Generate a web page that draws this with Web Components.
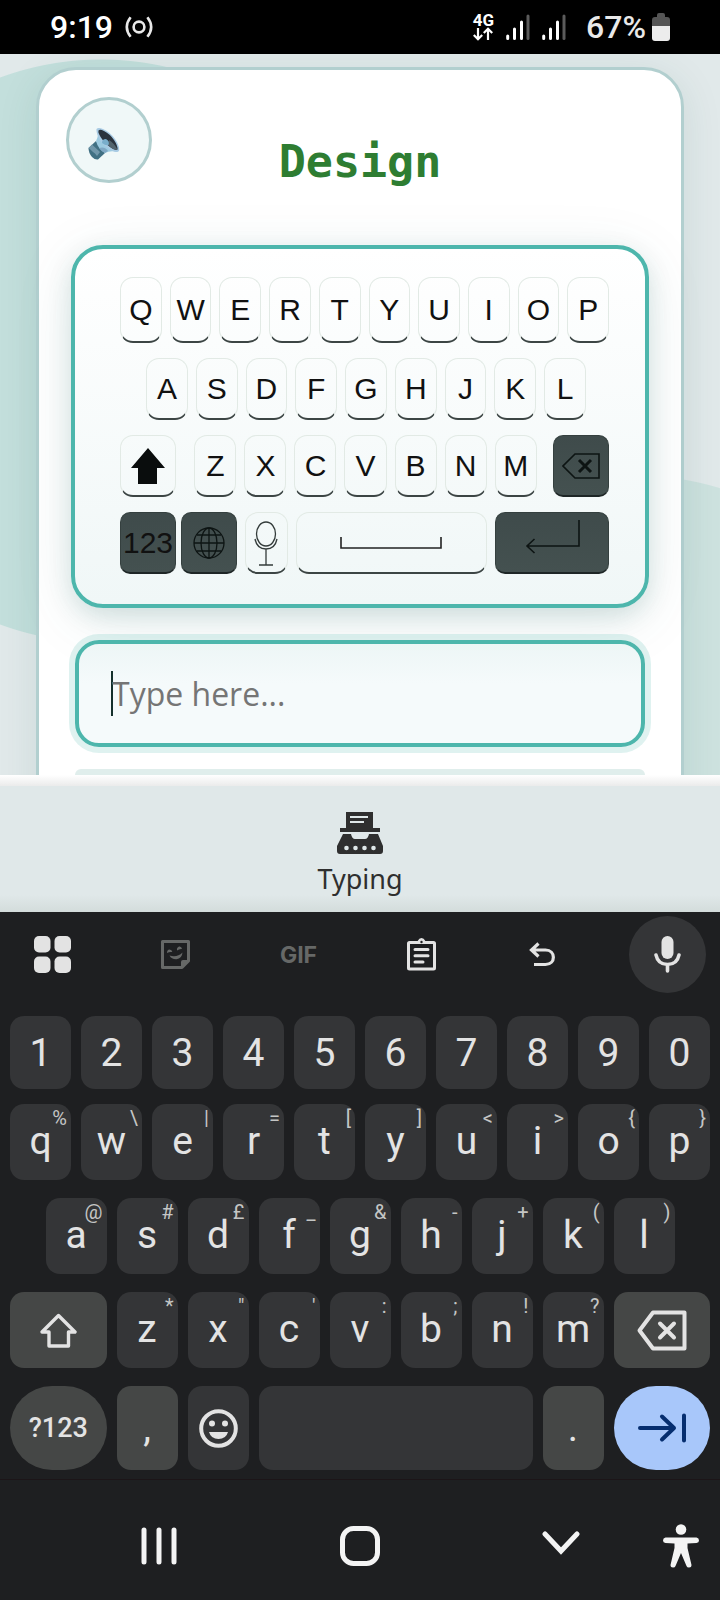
<!DOCTYPE html>
<html lang="en">
<head>
<meta charset="utf-8">
<meta name="viewport" content="width=device-width, initial-scale=1">
<title>Typing</title>
<style>
    html, body {
        margin: 0;
        height: 100%;
        background: #1e1f21;
    }
    body {
        display: flex;
        flex-direction: column;
        font-family: Roboto, "Liberation Sans", sans-serif;
    }
</style>
</head>
<body>

<status-bar time="9:19" battery="67%"></status-bar>
<typing-lesson heading="Design"></typing-lesson>
<tab-bar>Typing</tab-bar>
<soft-keyboard></soft-keyboard>
<nav-bar></nav-bar>

<script>
function makeTemplate(html) {
    const template = document.createElement('template');
    template.innerHTML = html;
    return template;
}

class BaseElement extends HTMLElement {
    constructor() {
        super();
        this.attachShadow({ mode: 'open' });
        this.shadowRoot.appendChild(this.constructor.template.content.cloneNode(true));
    }
}

/* ---------- status bar ---------- */

class StatusBar extends BaseElement {
    static template = makeTemplate(`
<style>
    :host {
        display: flex;
        align-items: center;
        flex: none;
        height: 54px;
        padding: 0 50px;
        background: #000;
        color: #fff;
        font-size: 32px;
        font-weight: 500;
        line-height: 54px;
    }
    #time {
        margin-right: 12px;
    }
    #network {
        display: flex;
        flex-direction: column;
        align-items: center;
        margin-left: auto;
        margin-right: 12px;
    }
    #network b {
        font-size: 17px;
        line-height: 14px;
    }
    .signal {
        margin-right: 12px;
    }
    #battery {
        color: #e9e9e9;
        margin: 0 6px 0 8px;
    }
    svg {
        display: block;
        flex: none;
    }
</style>
<span id="time"></span>
<svg width="28" height="22" viewBox="0 0 28 22" fill="none" stroke="#e8e8e8" stroke-width="2.6">
    <circle cx="14" cy="11" r="5.4"/>
    <path d="M5.6 1.2Q-2 11 5.6 20.8M22.4 1.2Q30 11 22.4 20.8"/>
</svg>
<span id="network">
    <b>4G</b>
    <svg width="20" height="14" viewBox="0 0 20 14" fill="none" stroke="#fff" stroke-width="2.2">
        <path d="M5 1V12M.8 8L5 12.2L9.2 8M15 13V2M10.8 6L15 1.8L19.2 6"/>
    </svg>
</span>
<svg class="signal" width="24" height="27" viewBox="0 0 24 27" stroke-width="3" stroke-linecap="round">
    <path stroke="#fff" d="M1.7 22V24.5M8.5 15V24.5M15.5 8V24.5"/>
    <path stroke="#5b5b5b" d="M22 2V24.5"/>
</svg>
<svg class="signal" width="24" height="27" viewBox="0 0 24 27" stroke-width="3" stroke-linecap="round">
    <path stroke="#fff" d="M1.7 22V24.5M8.5 15V24.5M15.5 8V24.5"/>
    <path stroke="#5b5b5b" d="M22 2V24.5"/>
</svg>
<span id="battery"></span>
<svg width="18" height="28" viewBox="0 0 18 28">
    <path fill="#555" d="M5 2Q5 0 7 0H11Q13 0 13 2V4H15Q18 4 18 7V14H0V7Q0 4 3 4H5Z"/>
    <path fill="#ececec" d="M0 13H18V25Q18 28 15 28H3Q0 28 0 25Z"/>
</svg>
`);

    connectedCallback() {
        this.shadowRoot.querySelector('#time').textContent = this.getAttribute('time');
        this.shadowRoot.querySelector('#battery').textContent = this.getAttribute('battery');
    }
}
customElements.define('status-bar', StatusBar);

/* ---------- keyboard picture inside the lesson ---------- */

class PictureKey extends BaseElement {
    static template = makeTemplate(`
<style>
    :host {
        display: flex;
        align-items: center;
        justify-content: center;
        flex: 42 1 0;
        min-width: 0;
        box-sizing: border-box;
        border: 1px solid #e2eae5;
        border-bottom: 2px solid #3c4544;
        border-radius: 13px;
        color: #111;
        font: 30px "Liberation Sans", Arial, sans-serif;
        white-space: nowrap;
    }
    :host([dark]) {
        background: linear-gradient(#3f4b4b, #445150);
        border-color: #35403f;
        border-bottom-color: #1e2626;
        border-radius: 10px;
    }
</style>
<slot></slot>
`);
}
customElements.define('picture-key', PictureKey);

class KeyboardPicture extends BaseElement {
    static template = makeTemplate(`
<style>
    :host {
        display: flex;
        flex-direction: column;
        gap: 15px;
        padding: 28px 36px 30px 45px;
        border: 4px solid #4db6ac;
        border-radius: 32px;
        background: linear-gradient(#fff, #f0f7f7);
        box-shadow: 0 8px 24px rgba(0, 80, 72, .13), 0 12px 60px rgba(0, 100, 100, .1);
    }
    .row {
        display: flex;
        gap: 8px;
        height: 62px;
    }
    #top {
        height: 66px;
    }
    #home {
        padding: 0 23px 0 26px;
    }
    svg {
        display: block;
    }
    .side { flex-grow: 57; }
    #shift { margin-right: 10px; }
    #erase { margin-left: 8px; }
    #globe { margin-left: -3px; }
    #last .side { flex-grow: 56; }
    #space { flex-grow: 196; }
    #enter { flex-grow: 116; }
</style>
<div class="row" id="top"></div>
<div class="row" id="home"></div>
<div class="row">
    <picture-key class="side" id="shift">
        <svg width="36" height="36" viewBox="0 0 36 36"><path fill="#0a0d0d" d="M18 0L35 20H27V36H8V20H1Z"/></svg>
    </picture-key>
    <picture-key dark class="side" id="erase">
        <svg width="38" height="26" viewBox="0 0 38 26" fill="none" stroke="#0d1413" stroke-width="1.6">
            <path d="M13 1H37V25H13L1 13Z"/>
            <path stroke-width="3" d="M17 7L29 19M29 7L17 19"/>
        </svg>
    </picture-key>
</div>
<div class="row" id="last">
    <picture-key dark class="side">123</picture-key>
    <picture-key dark class="side" id="globe">
        <svg width="32" height="32" viewBox="0 0 32 32" fill="none" stroke="#0d1413" stroke-width="1.3">
            <circle cx="16" cy="16" r="15"/>
            <ellipse cx="16" cy="16" rx="8" ry="15"/>
            <path d="M16 1V31M1 16H31M4 8H28M4 24H28"/>
        </svg>
    </picture-key>
    <picture-key>
        <svg width="24" height="46" viewBox="0 0 24 46" fill="none" stroke="#333b3a" stroke-width="1.3">
            <ellipse cx="12" cy="14" rx="9.5" ry="12"/>
            <path d="M1 19Q3 29 12 29Q21 29 23 19M12 29V45M5 45H19"/>
        </svg>
    </picture-key>
    <picture-key id="space">
        <svg width="102" height="12" viewBox="0 0 102 12" fill="none" stroke="#222" stroke-width="1.6"><path d="M1 0V11H101V0"/></svg>
    </picture-key>
    <picture-key dark id="enter">
        <svg width="56" height="52" viewBox="0 0 56 52" fill="none" stroke="#0d1413" stroke-width="1.6">
            <path d="M55 3V29H3M10.500 22L3 29L10.500 36"/>
        </svg>
    </picture-key>
</div>
`);

    connectedCallback() {
        const keys = (letters) => [...letters].map((letter) => {
            const key = document.createElement('picture-key');
            key.textContent = letter;
            return key;
        });
        this.shadowRoot.querySelector('#top').append(...keys('QWERTYUIOP'));
        this.shadowRoot.querySelector('#home').append(...keys('ASDFGHJKL'));
        this.shadowRoot.querySelector('#shift').after(...keys('ZXCVBNM'));
    }
}
customElements.define('keyboard-picture', KeyboardPicture);

/* ---------- lesson card ---------- */

class TypingLesson extends BaseElement {
    static template = makeTemplate(`
<style>
    :host {
        display: block;
        flex: 1 1 0;
        min-height: 0;
        overflow: hidden;
        box-sizing: border-box;
        padding: 13px 36px 0;
        background:
            radial-gradient(circle at 101px 297px, #c3dfdc 291px, transparent 292px),
            radial-gradient(circle at calc(100% - 85px) 713px, #cde2df 291px, transparent 292px),
            #e1e9ea;
        font-family: "Open Sans", sans-serif;
    }
    main {
        border: 3px solid #b2cfcf;
        border-radius: 40px;
        background: #fff;
        box-shadow: 0 8px 40px rgba(0, 77, 64, .1);
        padding-bottom: 60px;
    }
    header {
        display: grid;
        grid-template-columns: 86px 1fr 86px;
        align-items: start;
        padding: 27px 27px 0;
    }
    #sound {
        width: 86px;
        height: 86px;
        padding: 0 10px 0 0;
        border: 3px solid #b2cfcf;
        border-radius: 50%;
        background: #f0f8f8;
        display: flex;
        align-items: center;
        justify-content: center;
    }
    #sound svg {
        margin-top: 8px;
    }
    h1 {
        margin: 35px 0 0;
        text-align: center;
        font: bold 45px/60px "DejaVu Sans Mono", monospace;
        color: #2e7d32;
    }
    keyboard-picture {
        margin: 53px 32px 32px;
    }
    form {
        margin: 0 36px;
    }
    input {
        display: block;
        box-sizing: border-box;
        width: 100%;
        height: 107px;
        padding: 0 33px;
        border: 4px solid #4db6ac;
        border-radius: 24px;
        outline: none;
        box-shadow: 0 0 0 6px rgba(77, 182, 172, .18);
        /* the 2px line is the text cursor */
        background: linear-gradient(#15302c, #15302c) 32px 50% / 2px 45px no-repeat,
            linear-gradient(#edf6f6, #f5fafb 40%);
        caret-color: transparent;
        font: 32px "Open Sans", sans-serif;
        color: #15302c;
    }
    input::placeholder {
        color: #757575;
        opacity: 1;
    }
    #progress {
        height: 12px;
        margin-top: 22px;
        border-radius: 6px;
        background: #e0eeec;
    }
</style>
<main>
    <header>
        <button id="sound" aria-label="Play sound">
            <svg width="32" height="32" viewBox="0 0 32 32">
                <path fill="#407083" d="M.5 20L8 13L17 25L10 31.5Q7 32 4 29Q.5 25 .5 20Z"/>
                <path fill="#7097aa" d="M.5 20L4 16.500L12 24L9 28Q7 25 5 24Q2 21 .5 20Z"/>
                <path fill="#9ccbe1" d="M8 13Q11 8 9 2L30 24Q22 22 17 25Q10 21 8 13Z"/>
                <path fill="#7fa7c3" d="M11 20Q17 18 20 23L17 25Q13 23 11 20Z"/>
                <path fill="#a9cbe4" d="M8.500 1Q10-1 15 1Q22 4 27 11Q32 18 31 23Q29 25 25 23Q17 20 12 12Q8 5 8.500 1Z"/>
                <path fill="#2a333d" d="M10.500 2.500Q12 1 16 3Q22 6 26 12Q30 18 29.500 21.500Q27 23 22 19Q14 13 11 6Q10 4 10.500 2.500Z"/>
                <path fill="#53646d" d="M21 12Q26 15 29.500 21.500Q26 23 20 17Z"/>
                <path fill="#79aecb" d="M14 15Q14 11 18 11Q22 13 20.500 17Q18 18 14 15Z"/>
            </svg>
        </button>
        <h1></h1>
    </header>
    <keyboard-picture></keyboard-picture>
    <form>
        <input type="text" placeholder="Type here..." aria-label="Type here" autocomplete="off">
        <div id="progress"></div>
    </form>
</main>
`);

    connectedCallback() {
        this.shadowRoot.querySelector('h1').textContent = this.getAttribute('heading');
    }
}
customElements.define('typing-lesson', TypingLesson);

/* ---------- tab bar ---------- */

class TabBar extends BaseElement {
    static template = makeTemplate(`
<style>
    :host {
        display: block;
        flex: none;
        background: linear-gradient(transparent 120px, #d3dcdb) #e0e8e9;
    }
    #edge {
        height: 11px;
        background: linear-gradient(#fff, #ebebeb);
    }
    a {
        display: flex;
        flex-direction: column;
        align-items: center;
        gap: 6px;
        padding: 26px 0 14px;
        color: #2f2f2f;
        text-decoration: none;
        font: 27px/38px "Noto Sans", sans-serif;
    }
    svg {
        display: block;
    }
</style>
<div id="edge"></div>
<a href="#typing">
    <svg width="46" height="42" viewBox="0 0 46 42">
        <path fill="#2f2f2f" fill-rule="evenodd" d="M9 0H36V16H43V20H3V16H9ZM13 4V6H31V4ZM13 9V11H27V9Z"/>
        <path fill="#2f2f2f" d="M6 22H14Q15 27 18 27H28Q31 27 32 22H41L46 34V39Q46 42 43 42H3Q0 42 0 39V34Z"/>
        <g fill="#e0e8e9"><circle cx="9.500" cy="36" r="2.300"/><circle cx="18.500" cy="36" r="2.300"/><circle cx="27.500" cy="36" r="2.300"/><circle cx="36.500" cy="36" r="2.300"/></g>
    </svg>
    <slot></slot>
</a>
`);
}
customElements.define('tab-bar', TabBar);

/* ---------- soft keyboard ---------- */

class SoftKey extends BaseElement {
    static template = makeTemplate(`
<style>
    :host {
        display: grid;
        grid-column: span 2;
        min-width: 0;
    }
    :host([wide]) { grid-column: span 3; }
    :host([space]) { grid-column: span 8; }
    :host([first]) { grid-column: 2 / span 2; }
    button {
        position: relative;
        display: flex;
        align-items: center;
        justify-content: center;
        min-width: 0;
        padding: 0;
        border: 0;
        border-radius: 14px;
        background: #343537;
        color: #e3e3e3;
        font: 39px/46px Roboto, sans-serif;
        cursor: pointer;
    }
    :host([hint]) button { padding-bottom: 3px; }
    :host([tone]) button { background: #454746; }
    :host([round]) button {
        border-radius: 42px;
        font-size: 27px;
        font-weight: 500;
    }
    :host([tone="accent"]) button { background: #a8c7fa; }
    small {
        position: absolute;
        top: 2px;
        right: 4px;
        font-size: 20px;
        line-height: 24px;
        color: #c4c6c5;
    }
    ::slotted(svg) { display: block; }
</style>
<button type="button"><slot></slot></button>
`);

    connectedCallback() {
        const button = this.shadowRoot.querySelector('button');
        if (this.hasAttribute('name')) {
            button.setAttribute('aria-label', this.getAttribute('name'));
        }
        if (this.hasAttribute('hint')) {
            const hint = document.createElement('small');
            hint.textContent = this.getAttribute('hint');
            button.appendChild(hint);
        }
    }
}
customElements.define('soft-key', SoftKey);

class SoftKeyboard extends BaseElement {
    static template = makeTemplate(`
<style>
    :host {
        display: block;
        flex: none;
        padding: 4px 10px 9px;
        background: #1e1f21;
        border-bottom: 1px solid #1c1518;
    }
    #tools {
        display: flex;
        justify-content: space-between;
        padding: 0 4px;
        margin-bottom: 23px;
    }
    #tools button {
        display: flex;
        align-items: center;
        justify-content: center;
        width: 77px;
        height: 77px;
        padding: 0;
        border: 0;
        border-radius: 50%;
        background: none;
        color: #666867;
        font: bold 23px Inter, sans-serif;
    }
    #tools #voice {
        background: #343537;
    }
    .row {
        display: grid;
        grid-template-columns: repeat(20, minmax(0, 1fr));
        column-gap: 10px;
        height: 76px;
        margin-top: 18px;
    }
    #digits { height: 73px; }
    #upper { margin-top: 15px; }
    #last { height: 84px; }
</style>
<div id="tools">
    <button aria-label="Menu">
        <svg width="37" height="37" viewBox="0 0 37 37" fill="#e3e3e3">
            <rect width="16.500" height="16.500" rx="5"/><rect x="20.500" width="16.500" height="16.500" rx="5"/>
            <rect y="20.500" width="16.500" height="16.500" rx="5"/><rect x="20.500" y="20.500" width="16.500" height="16.500" rx="5"/>
        </svg>
    </button>
    <button aria-label="Stickers">
        <svg width="29" height="29" viewBox="0 0 29 29">
            <path fill="none" stroke="#666867" stroke-width="3" stroke-linejoin="round" d="M1.500 1.500H27.500V21L21 27.500H1.500Z"/>
            <path fill="#666867" d="M20 28V22Q20 20 22 20H28ZM8.500 15.500Q16 18 21.500 12.500Q21 18.500 15.500 19.300Q10.500 19.500 8.500 15.500ZM6 13Q6 9.500 8.500 9.500Q11 9.500 11.300 12Q8.500 11.500 6 13ZM16 10.500Q15.500 7.500 18 6.500Q20.500 6 21 9Q18.500 8.500 16 10.500Z"/>
        </svg>
    </button>
    <button>GIF</button>
    <button aria-label="Clipboard">
        <svg width="29" height="33" viewBox="0 0 29 33" fill="none" stroke="#e3e3e3" stroke-width="3" stroke-linejoin="round">
            <rect x="1.500" y="4.500" width="26" height="26.500" rx="1"/>
            <path stroke-linecap="round" d="M8 11.500H21M8 17.700H21M8 24H16"/>
            <path fill="#e3e3e3" stroke="none" d="M9 5.500Q10.500 4 11 2.500Q12 0 14.500 0Q17 0 18 2.500Q18.500 4 20 5.500Z"/>
            <circle cx="14.500" cy="4" r="1.200" fill="#1e1f21" stroke="none"/>
        </svg>
    </button>
    <button aria-label="Undo">
        <svg width="32" height="25" viewBox="0 0 32 25" fill="none" stroke="#e3e3e3" stroke-width="3.200">
            <path d="M9.500 1.500L2.500 8L9.500 14.500M3 8H16.500C27 8 27 22.500 16.500 22.500H5"/>
        </svg>
    </button>
    <button id="voice" aria-label="Voice input">
        <svg width="27" height="37" viewBox="0 0 27 37">
            <rect x="7.500" width="12" height="23" rx="6" fill="#e3e3e3"/>
            <path fill="none" stroke="#e3e3e3" stroke-width="3.600" stroke-linecap="round" d="M2 19Q4 28.500 13.500 28.500Q23 28.500 25 19M13.500 29V35"/>
        </svg>
    </button>
</div>
<div class="row" id="digits"></div>
<div class="row" id="upper"></div>
<div class="row" id="middle"></div>
<div class="row">
    <soft-key wide tone="grey" name="Shift" id="shift">
        <svg width="37" height="35" viewBox="0 0 37 35" fill="none" stroke="#e3e3e3" stroke-width="3.400" stroke-linejoin="round">
            <path d="M18.500 2.500L35 19H28.500V33H9V19H2Z"/>
        </svg>
    </soft-key>
    <soft-key wide tone="grey" name="Backspace">
        <svg width="50" height="41" viewBox="0 0 50 41" fill="none" stroke="#e3e3e3" stroke-width="4" stroke-linejoin="round" stroke-linecap="round">
            <path d="M16 2.500H47.500V38.500H16L2.500 20.500Z"/>
            <path d="M23 13.500L37 27.500M37 13.500L23 27.500"/>
        </svg>
    </soft-key>
</div>
<div class="row" id="last">
    <soft-key wide round tone="grey">?123</soft-key>
    <soft-key tone="grey">,</soft-key>
    <soft-key name="Emoji">
        <svg width="39" height="39" viewBox="0 0 39 39">
            <circle cx="19.500" cy="19.500" r="17.300" fill="none" stroke="#e3e3e3" stroke-width="4"/>
            <circle cx="13" cy="14.500" r="3" fill="#e3e3e3"/><circle cx="26" cy="14.500" r="3" fill="#e3e3e3"/>
            <path fill="#e3e3e3" d="M10 23H29Q27 30 19.500 30Q12 30 10 23Z"/>
        </svg>
    </soft-key>
    <soft-key space name="Space"></soft-key>
    <soft-key tone="grey">.</soft-key>
    <soft-key wide round tone="accent" name="Next">
        <svg width="48" height="30" viewBox="0 0 48 30" fill="none" stroke="#062e6f" stroke-width="4" stroke-linecap="round" stroke-linejoin="round">
            <path d="M2 15H36M24 3.500L36 15L24 26.500M46 2.500V27.500"/>
        </svg>
    </soft-key>
</div>
`);

    connectedCallback() {
        const root = this.shadowRoot;
        root.querySelector('#digits').append(...this._keys('1234567890'));
        root.querySelector('#upper').append(...this._keys('qwertyuiop', '%\\|=[]<>{}'));
        root.querySelector('#middle').append(...this._keys('asdfghjkl', '@#£_&-+()'));
        root.querySelector('#middle').firstElementChild.setAttribute('first', '');
        root.querySelector('#shift').after(...this._keys('zxcvbnm', '*"\':;!?'));
    }

    _keys(labels, hints = '') {
        return [...labels].map((label, i) => {
            const key = document.createElement('soft-key');
            key.textContent = label;
            if (hints[i]) {
                key.setAttribute('hint', hints[i]);
            }
            return key;
        });
    }
}
customElements.define('soft-keyboard', SoftKeyboard);

/* ---------- navigation bar ---------- */

class NavBar extends BaseElement {
    static template = makeTemplate(`
<style>
    :host {
        display: grid;
        grid-template-columns: 1fr 1fr 1fr 40px;
        flex: none;
        padding: 42px 19px 30px 58px;
        background: #1e1f21;
    }
    button {
        display: flex;
        align-items: center;
        justify-content: center;
        height: 48px;
        padding: 0;
        border: 0;
        background: none;
    }
</style>
<button aria-label="Recent apps">
    <svg width="36" height="38" viewBox="0 0 36 38" stroke="#f4f4f4" stroke-width="5" stroke-linecap="round"><path d="M3 3V35M18 3V35M33 3V35"/></svg>
</button>
<button aria-label="Home">
    <svg width="40" height="40" viewBox="0 0 40 40" fill="none" stroke="#f4f4f4" stroke-width="5"><rect x="2.500" y="2.500" width="35" height="35" rx="11"/></svg>
</button>
<button aria-label="Hide keyboard">
    <svg width="38" height="32" viewBox="0 0 38 32" fill="none" stroke="#f4f4f4" stroke-width="5" stroke-linecap="round"><path d="M3 4L19 21L35 4"/></svg>
</button>
<button aria-label="Accessibility">
    <svg width="36" height="44" viewBox="0 0 36 44" fill="#f4f4f4">
        <circle cx="18" cy="5.500" r="5.300"/>
        <path d="M2.500 13.500H33.500Q36 14 36 16.500Q36 18.500 33.500 19L24.500 19.500V24L28.500 41Q28.500 43.500 26 43.500Q24 43.500 23.500 42L18 29L12.500 42Q12 43.500 10 43.500Q7.500 43.500 7.500 41L11.500 24V19.500L2.500 19Q0 18.500 0 16.500Q0 14 2.500 13.500Z"/>
    </svg>
</button>
`);
}
customElements.define('nav-bar', NavBar);
</script>
</body>
</html>
